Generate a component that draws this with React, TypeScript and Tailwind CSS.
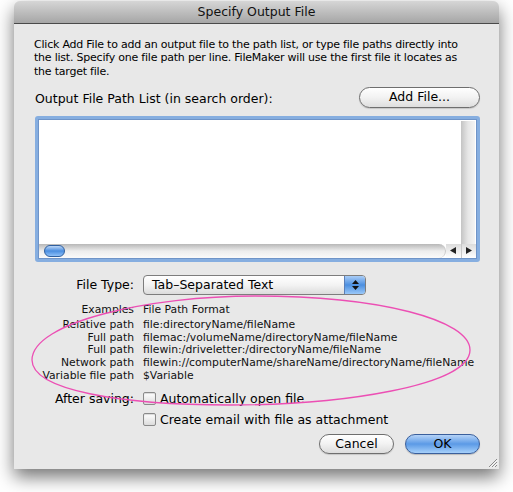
import React from 'react';

const font = { fontFamily: '"DejaVu Sans", "Liberation Sans", sans-serif' };

const examples: [string, string][] = [
  ['Relative path', 'file:directoryName/fileName'],
  ['Full path', 'filemac:/volumeName/directoryName/fileName'],
  ['Full path', 'filewin:/driveletter:/directoryName/fileName'],
  ['Network path', 'filewin://computerName/shareName/directoryName/fileName'],
  ['Variable file path', '$Variable'],
];

const Checkbox: React.FC = () => (
  <span className="w-[13px] h-[13px] shrink-0 rounded-[2px] border border-[#8a8a8a] bg-gradient-to-b from-white to-[#dcdcdc] shadow-[inset_0_1px_1px_rgba(0,0,0,0.15)]" />
);

const App: React.FC = () => {
  return (
    <div className="relative w-[513px] h-[492px] bg-white overflow-hidden text-black" style={font}>
      {/* dialog window */}
      <div className="absolute left-[14px] top-[1px] w-[485px] h-[468px] rounded-t-[6px] bg-[#e8e8e8] shadow-[0_8px_18px_rgba(0,0,0,0.55)] flex flex-col">
        <div className="h-[23px] shrink-0 rounded-t-[6px] bg-gradient-to-b from-[#d6d6d6] to-[#a6a6a6] border-b border-[#4a4a4a] flex items-center justify-center text-[12.5px] text-[#111]">
          Specify Output File
        </div>

        <div className="flex-1 flex flex-col pl-[20px] pr-[19px] relative">
          <p className="mt-[14px] text-[11px] leading-[13.3px] tracking-[-0.22px] whitespace-nowrap">
            Click Add File to add an output file to the path list, or type file paths directly into
            <br />
            the list. Specify one file path per line. FileMaker will use the first file it locates as
            <br />
            the target file.
          </p>

          <div className="mt-[9px] h-[21px] flex items-center justify-between">
            <span className="text-[12.5px] pl-[1px] pt-[3px]">Output File Path List (in search order):</span>
            <button className="w-[121px] h-[21px] rounded-full border border-[#6e6e6e] bg-gradient-to-b from-white via-[#f2f2f2] to-[#dedede] text-[12.5px] flex items-center justify-center shadow-[0_1px_1px_rgba(0,0,0,0.15)]">
              Add File...
            </button>
          </div>

          {/* list box with focus ring */}
          <div className="mt-[8px] ml-[1px] h-[146px] rounded-[3px] border-[3px] border-[#86aee0] bg-[#6f94c8] p-[1px]">
            <div className="w-full h-full bg-white flex flex-col">
              <div className="flex-1 flex justify-end pt-[1px]">
                <div className="w-[14px] mr-[1px] bg-gradient-to-r from-[#c4c4c4] via-[#e6e6e6] to-[#f4f4f4]" />
              </div>
              <div className="h-[14px] flex items-center">
                <div className="flex-1 h-full rounded-r-full bg-gradient-to-b from-[#b8b8b8] via-[#ededed] to-[#fafafa] border-r border-[#c8c8c8] flex items-center pl-[5px]">
                  <div className="w-[21px] h-[12px] rounded-full border border-[#2f5f9f] bg-gradient-to-b from-[#bcd6f6] via-[#4a8ee0] to-[#8ec0f8]" />
                </div>
                <div className="w-[30px] h-full flex bg-gradient-to-b from-[#dcdcdc] to-white">
                  <div className="flex-1 flex items-center justify-center border-r border-[#c8c8c8]">
                    <svg width="6" height="7" viewBox="0 0 6 7"><path d="M6 0 L0 3.5 L6 7 Z" fill="#222" /></svg>
                  </div>
                  <div className="flex-1 flex items-center justify-center">
                    <svg width="6" height="7" viewBox="0 0 6 7"><path d="M0 0 L6 3.5 L0 7 Z" fill="#222" /></svg>
                  </div>
                </div>
              </div>
            </div>
          </div>

          {/* file type */}
          <div className="mt-[13px] flex items-center h-[20px]">
            <span className="w-[100px] text-right text-[12.5px]">File Type:</span>
            <div className="ml-[9px] w-[223px] h-[20px] rounded-[4px] border border-[#7d7d7d] bg-gradient-to-b from-white via-[#f3f3f3] to-[#dcdcdc] flex items-center overflow-hidden">
              <span className="flex-1 pl-[8px] text-[12.5px]">Tab–Separated Text</span>
              <div className="w-[21px] h-full bg-gradient-to-b from-[#a9cdf7] via-[#4b8fe0] to-[#9ac8f8] border-l border-[#5a7fb8] flex flex-col items-center justify-center gap-[2px]">
                <svg width="7" height="4" viewBox="0 0 7 4"><path d="M3.5 0 L7 4 L0 4 Z" fill="#111" /></svg>
                <svg width="7" height="4" viewBox="0 0 7 4"><path d="M0 0 L7 0 L3.5 4 Z" fill="#111" /></svg>
              </div>
            </div>
          </div>

          {/* examples */}
          <div className="mt-[8px] grid grid-cols-[100px_1fr] gap-x-[9px] text-[10.8px] text-[#111]">
            <span className="text-right leading-[14px]">Examples</span>
            <span className="leading-[14px]">File Path Format</span>
            <div className="col-span-2 h-[2px]" />
            {examples.map(([k, v], i) => (
              <React.Fragment key={i}>
                <span className="text-right leading-[12.8px] whitespace-nowrap">{k}</span>
                <span className="leading-[12.8px] whitespace-nowrap">{v}</span>
              </React.Fragment>
            ))}
          </div>

          {/* after saving */}
          <div className="mt-[8px] flex items-center h-[16px] text-[12.5px]">
            <span className="w-[100px] text-right">After saving:</span>
            <span className="ml-[9px] flex items-center gap-[4px]">
              <Checkbox />
              Automatically open file
            </span>
          </div>
          <div className="mt-[5px] flex items-center h-[16px] text-[12.5px] pl-[109px] gap-[4px]">
            <Checkbox />
            Create email with file as attachment
          </div>

          <div className="mt-[6px] flex justify-end gap-[11px]">
            <button className="w-[75px] h-[20px] rounded-full border border-[#6e6e6e] bg-gradient-to-b from-white via-[#f2f2f2] to-[#dcdcdc] text-[12.5px] flex items-center justify-center shadow-[0_1px_1px_rgba(0,0,0,0.15)]">
              Cancel
            </button>
            <button className="w-[75px] h-[20px] rounded-full border border-[#3a5f9c] bg-gradient-to-b from-[#b5d3f7] via-[#5b9ae6] to-[#a6d0fa] text-[12.5px] flex items-center justify-center shadow-[0_1px_1px_rgba(0,0,0,0.2)]">
              OK
            </button>
          </div>

          {/* resize grip */}
          <div className="absolute right-[1px] bottom-[1px] w-[12px] h-[12px]">
            <svg width="12" height="12" viewBox="0 0 12 12">
              <path d="M11 3 L3 11 M11 6 L6 11 M11 9 L9 11" stroke="#8a8a8a" strokeWidth="1" />
              <path d="M11.5 4 L4 11.5 M11.5 7 L7 11.5" stroke="#ffffff" strokeWidth="0.8" />
            </svg>
          </div>
        </div>
      </div>

      {/* pink annotation ellipse */}
      <svg className="absolute inset-0 pointer-events-none" width="513" height="492">
        <path
          d="M 32 360 C 32 322, 150 296, 255 296 C 380 296, 470 320, 470 350 C 470 386, 340 405, 230 405 C 120 405, 32 390, 32 360 Z"
          fill="none"
          stroke="#ec4fb4"
          strokeWidth="1.3"
        />
      </svg>
    </div>
  );
};

export default App;
